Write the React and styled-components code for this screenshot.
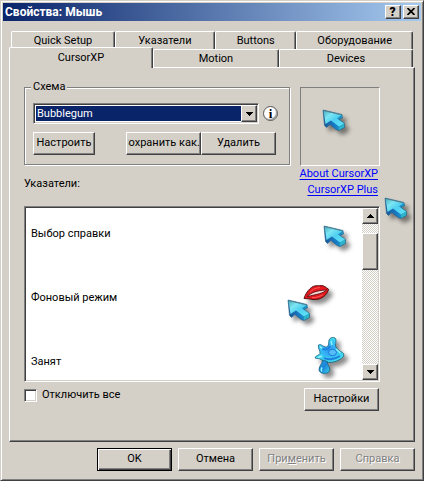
import { useState } from 'react';
import styled, { createGlobalStyle, css } from 'styled-components';

const GlobalStyle = createGlobalStyle`
  * {
    box-sizing: border-box;
  }
  body {
    margin: 0;
    background: #d4d0c8;
  }
  body, button, select, input {
    font-family: Roboto, 'Liberation Sans', sans-serif;
    font-size: 11px;
    line-height: 14px;
    color: #000;
  }
`;

const raised = css`
  border: 1px solid;
  border-color: #fff #404040 #404040 #fff;
  box-shadow: inset -1px -1px #808080;
`;

const sunken = css`
  border: 1px solid;
  border-color: #808080 #fff #fff #808080;
  box-shadow: inset 1px 1px #404040, inset -1px -1px #d4d0c8;
`;

const Window = styled.main`
  display: flex;
  flex-direction: column;
  min-height: 100vh;
  padding: 2px;
  background: #d4d0c8;
  border: 1px solid;
  border-color: #d4d0c8 #404040 #404040 #d4d0c8;
  box-shadow: inset 1px 1px #fff, inset -1px -1px #808080;
`;

const TitleBar = styled.header`
  display: flex;
  align-items: center;
  gap: 2px;
  height: 18px;
  padding: 0 2px;
  background: linear-gradient(to right, #0a246a, #a6caf0);
`;

const Title = styled.h1`
  flex: 1;
  margin: 0;
  color: #fff;
  font-size: 12px;
  font-weight: 700;
`;

const TitleButton = styled.button`
  ${raised}
  display: flex;
  align-items: center;
  justify-content: center;
  width: 16px;
  height: 14px;
  padding: 0 1px 1px 0;
  background: #d4d0c8;
  font-size: 12px;
  font-weight: 900;
`;

const Content = styled.div`
  display: flex;
  flex: 1;
  flex-direction: column;
  padding: 10px 6px 7px;
`;

const TabRow = styled.div`
  display: flex;
  height: 18px;
  padding: 0 2px;
`;

const Tab = styled.button`
  flex: ${({ $size }) => $size} 1 0;
  min-width: 0;
  height: ${({ $active }) => ($active ? '21px' : '18px')};
  margin: ${({ $active }) => ($active ? '-2px 0 -1px -2px' : '0')};
  padding: 0;
  background: #d4d0c8;
  border: solid;
  border-width: 1px 1px 0;
  border-color: #fff #404040 #fff #fff;
  border-radius: 2px 2px 0 0;
  box-shadow: inset -1px 0 #808080;
  z-index: ${({ $active }) => ($active ? 1 : 0)};
`;

const Panel = styled.section`
  display: flex;
  flex: 1;
  flex-direction: column;
  padding: 19px 34px 28px 14px;
  border: 1px solid;
  border-color: #fff #404040 #404040 #fff;
  box-shadow: inset -1px -1px #808080;
`;

const Top = styled.div`
  display: flex;
  align-items: flex-start;
  gap: 10px;
`;

const Scheme = styled.div`
  display: flex;
  flex: 1;
  flex-direction: column;
  position: relative;
  min-width: 0;
  height: 78px;
  padding: 15px 11px 0 8px;
  border: 1px solid #808080;
  box-shadow: 1px 1px #fff, inset 1px 1px #fff;
`;

const Legend = styled.span`
  position: absolute;
  top: -8px;
  left: 6px;
  padding: 0 2px;
  background: #d4d0c8;
`;

const SchemeRow = styled.div`
  display: flex;
  align-items: center;
  gap: 4px;
  margin-bottom: 8px;
`;

const SelectBox = styled.div`
  ${sunken}
  display: flex;
  flex: 1;
  height: 21px;
  padding: 1px;
  background: #fff;
`;

const Select = styled.select`
  appearance: none;
  flex: 1;
  min-width: 0;
  margin: 1px 0 1px 1px;
  padding: 0 1px;
  background: #0a246a;
  border: 0;
  border-radius: 0;
  outline: 0;
  color: #fff;
`;

const SmallButton = styled.button`
  ${raised}
  display: flex;
  flex: none;
  align-items: center;
  justify-content: center;
  width: 16px;
  height: ${({ $height }) => $height || '16px'};
  padding: 0;
  background: #d4d0c8;
`;

const InfoButton = styled.button`
  width: 15px;
  height: 15px;
  padding: 0;
  background: #fff;
  border: 1px solid #555;
  border-radius: 50%;
  box-shadow: inset -1px -1px 1px #999;
  font: 700 13px/12px 'Liberation Serif', serif;
`;

const Actions = styled.div`
  display: flex;
  padding-right: 2px;
`;

const Button = styled.button`
  ${raised}
  display: flex;
  flex: none;
  align-items: center;
  justify-content: center;
  width: ${({ $width }) => $width || '75px'};
  height: 23px;
  padding: 0 1px 1px;
  overflow: hidden;
  white-space: nowrap;
  background: #d4d0c8;
  ${({ $default }) =>
    $default &&
    css`
      border-color: #000;
      box-shadow: inset 1px 1px #fff, inset -1px -1px #404040,
        inset -2px -2px #808080;
    `}
  &:disabled {
    color: #808080;
    text-shadow: 1px 1px #fff;
  }
`;

const Caption = styled.span`
  display: flex;
  flex: 1;
  justify-content: center;
  min-width: 0;
  overflow: hidden;
`;

const SaveButton = styled(Button)`
  margin-left: auto;
`;

const Preview = styled.div`
  width: 80px;
  height: 79px;
  padding: 22px;
  border: 1px solid;
  border-color: #808080 #fff #fff #808080;
`;

const Middle = styled.div`
  display: flex;
  justify-content: space-between;
  height: 40px;
  padding-right: 2px;
`;

const ListLabel = styled.span`
  padding-top: 11px;
`;

const Links = styled.nav`
  display: flex;
  flex-direction: column;
  align-items: flex-end;
  line-height: 16px;
`;

const Link = styled.a`
  color: #00f;
  text-underline-offset: 2px;
`;

const ListBox = styled.div`
  ${sunken}
  display: flex;
  flex: none;
  height: 176px;
  padding: 1px;
  background: #fff;
`;

const Items = styled.ul`
  flex: 1;
  height: 172px;
  margin: 0;
  padding: 0;
  overflow: hidden;
  list-style: none;
`;

const Item = styled.li`
  display: flex;
  justify-content: space-between;
  height: 64px;
  padding-left: 5px;
  line-height: 52px;
`;

const Scrollbar = styled.div`
  display: flex;
  flex-direction: column;
  width: 16px;
  background: repeating-conic-gradient(#fff 0 25%, #d4d0c8 0 50%) 0 0 / 2px 2px;
`;

const Thumb = styled.div`
  ${raised}
  height: 37px;
  margin: 9px 0 auto;
  background: #d4d0c8;
`;

const Bottom = styled.div`
  display: flex;
  justify-content: space-between;
  align-items: flex-start;
  margin-top: 6px;
  padding-right: 1px;
`;

const CheckLabel = styled.label`
  display: flex;
  align-items: center;
  gap: 5px;
`;

const Checkbox = styled.input`
  ${sunken}
  appearance: none;
  width: 13px;
  height: 13px;
  margin: 0;
  background: #fff;
  &:checked {
    background: #fff radial-gradient(#000 35%, transparent 40%);
  }
`;

const Footer = styled.footer`
  display: flex;
  justify-content: flex-end;
  gap: 6px;
  margin-top: 6px;
`;

const Drawing = styled.svg`
  display: block;
  flex: none;
  overflow: visible;
  filter: drop-shadow(4px 4px 2px rgba(0, 0, 0, 0.45));
`;

const Pointer = styled.div`
  position: absolute;
  top: 198px;
  right: 15px;
  pointer-events: none;
`;

const Gradients = () => (
  <svg width="0" height="0" style={{ position: 'absolute' }} aria-hidden="true">
    <defs>
      <linearGradient id="face" x1="0" y1="0" x2="1" y2="1">
        <stop offset="0" stopColor="#4ba9b8" />
        <stop offset=".3" stopColor="#7ce6f4" />
        <stop offset=".55" stopColor="#4fd0f0" />
        <stop offset="1" stopColor="#62e4f8" />
      </linearGradient>
      <linearGradient id="side" x1="0" y1="0" x2="1" y2="0">
        <stop offset="0" stopColor="#1c5590" />
        <stop offset=".5" stopColor="#1677c4" />
        <stop offset="1" stopColor="#25a3c4" />
      </linearGradient>
      <radialGradient id="splat">
        <stop offset="0" stopColor="#2c8ff0" />
        <stop offset=".5" stopColor="#35b8f4" />
        <stop offset="1" stopColor="#43dcee" />
      </radialGradient>
      <linearGradient id="drop" x1="0" y1="0" x2="1" y2="1">
        <stop offset="0" stopColor="#2a9be8" />
        <stop offset=".5" stopColor="#1d86d8" />
        <stop offset="1" stopColor="#3bd8f0" />
      </linearGradient>
    </defs>
  </svg>
);

const Arrow = () => (
  <g>
    <path
      d="M0 0 19 4.5 19.5 8 16 9.5 21.5 13.5V17.5L16 20.5 13 19.5 7 14.5 3.5 17.5 1.5 15.5Z"
      fill="url(#side)"
      stroke="#20618a"
      strokeWidth=".6"
    />
    <path d="M.5.5 18.5 5 14 8.5 21 13.5 16 16.5 8 10.5 2.5 14Z" fill="url(#face)" />
    <path d="M16 17 21 14V17L16 20Z" fill="#2fb5ca" />
    <path d="M.7.6 18.5 5" stroke="#527f85" strokeWidth=".8" />
  </g>
);

const Lips = () => (
  <g stroke="#4a0808" strokeWidth=".9">
    <path
      d="M0 13.5C1.5 9 4 4.5 9 1.5 12 0 15 1 17 .6 20 .4 22 2.6 24.5 4.2 24 8 20 12.5 15 14 10 15.5 6 13.5 0 13.5Z"
      fill="#e3191f"
    />
    <path d="M3 11.5C8 7.5 12 5.5 22.5 5 20 8 13 9.5 3 11.5Z" fill="#f3d5d5" strokeWidth=".8" />
    <path d="M6 7.5C8 4.5 11 3 16 2.6M8 12.7C13 12.5 16 11.5 19 9.5" fill="none" stroke="#ff6060" />
  </g>
);

const Splat = () => (
  <g stroke="#17617f" strokeWidth=".8">
    <path
      d="M15 4C16 1.5 19 .8 21 2 23 3.5 21.5 7 21.5 10 22.5 13 25.5 15 28.5 16.5 31 18.5 29.5 21.5 26.5 23 23 25.5 19 26.5 14.5 26.5 11 27 9 24.5 7 23.5 5 22 3 23 1 22 1.5 19.5 5 19.5 6 17.5 6.5 14.5 3.5 12 4.5 9 6 7.5 8 9.5 10 10.5 12 11.5 13.5 11 14.5 9Z"
      fill="url(#splat)"
    />
    <path
      d="M8.5 24C8.8 27 5 30 5 33.5 5 36 7.5 37.5 10.5 37.5 14 37.5 16 35.5 15.8 33 15.5 30 13 28.5 13.5 25.5Z"
      fill="url(#drop)"
    />
    <path
      d="M8.5 13C12 14 15 12.5 16 10M10 22C13 24 20 24 26 20"
      fill="none"
      stroke="#1d7fe0"
      strokeWidth="2"
    />
    <ellipse cx="18.5" cy="16.5" rx="4" ry="3.2" fill="#55bdf8" stroke="#1468d0" />
    <path
      d="M17 5 18 9M6 10.5 8 12.5M22 13 26.5 17M8 31.5C7 33 7 34.5 8 35.5M4 21.5 8 20"
      fill="none"
      stroke="#8df6fb"
      strokeWidth="1.4"
    />
  </g>
);

const Cursor = () => (
  <Drawing width="24" height="24" aria-hidden="true">
    <Arrow />
  </Drawing>
);

const Triangle = ({ up }) => (
  <svg width="7" height="4" shapeRendering="crispEdges" aria-hidden="true">
    <path d={up ? 'M3 0H4V1H5V2H6V3H7V4H0V3H1V2H2V1H3Z' : 'M0 0H7V1H6V2H5V3H4V4H3V3H2V2H1V1H0Z'} />
  </svg>
);

const backTabs = [
  { name: 'Quick Setup', size: 104 },
  { name: 'Указатели', size: 100 },
  { name: 'Buttons', size: 81 },
  { name: 'Оборудование', size: 117 },
];

const frontTabs = [
  { name: 'CursorXP', size: 144 },
  { name: 'Motion', size: 126 },
  { name: 'Devices', size: 134 },
];

const pointers = [
  {
    name: 'Выбор справки',
    drawing: (
      <g transform="translate(42 18)">
        <Arrow />
      </g>
    ),
  },
  {
    name: 'Фоновый режим',
    drawing: (
      <>
        <g transform="translate(22 13)">
          <Lips />
        </g>
        <g transform="translate(6 28)">
          <Arrow />
        </g>
      </>
    ),
  },
  {
    name: 'Занят',
    drawing: (
      <g transform="translate(32 0)">
        <Splat />
      </g>
    ),
  },
];

export default function App() {
  const [active, setActive] = useState('CursorXP');
  const [disabled, setDisabled] = useState(false);

  const renderTab = ({ name, size }) => (
    <Tab
      key={name}
      type="button"
      role="tab"
      aria-selected={active === name}
      $size={size}
      $active={active === name}
      onClick={() => setActive(name)}
    >
      {name}
    </Tab>
  );

  return (
    <Window>
      <GlobalStyle />
      <Gradients />
      <TitleBar>
        <Title>Свойства: Мышь</Title>
        <TitleButton type="button" aria-label="Справка">
          ?
        </TitleButton>
        <TitleButton type="button" aria-label="Закрыть">
          <svg width="8" height="7" aria-hidden="true">
            <path d="M.5 0 7.5 7M7.5 0 .5 7" stroke="#000" strokeWidth="1.7" />
          </svg>
        </TitleButton>
      </TitleBar>
      <Content>
        <TabRow role="tablist">{backTabs.map(renderTab)}</TabRow>
        <TabRow role="tablist">{frontTabs.map(renderTab)}</TabRow>
        <Panel>
          <Top>
            <Scheme role="group" aria-labelledby="scheme">
              <Legend id="scheme">Схема</Legend>
              <SchemeRow>
                <SelectBox>
                  <Select aria-labelledby="scheme">
                    <option>Bubblegum</option>
                  </Select>
                  <SmallButton type="button" aria-label="Открыть" $height="17px">
                    <Triangle />
                  </SmallButton>
                </SelectBox>
                <InfoButton type="button">i</InfoButton>
              </SchemeRow>
              <Actions>
                <Button type="button" $width="62px">
                  Настроить
                </Button>
                <SaveButton type="button">
                  <Caption>Сохранить как...</Caption>
                </SaveButton>
                <Button type="button">Удалить</Button>
              </Actions>
            </Scheme>
            <Preview>
              <Cursor />
            </Preview>
          </Top>
          <Middle>
            <ListLabel id="pointers">Указатели:</ListLabel>
            <Links>
              <Link href="#about">About CursorXP</Link>
              <Link href="#plus">CursorXP Plus</Link>
            </Links>
          </Middle>
          <ListBox>
            <Items aria-labelledby="pointers">
              {pointers.map(({ name, drawing }) => (
                <Item key={name}>
                  {name}
                  <Drawing width="80" height="52" aria-hidden="true">
                    {drawing}
                  </Drawing>
                </Item>
              ))}
            </Items>
            <Scrollbar>
              <SmallButton type="button" aria-label="Вверх">
                <Triangle up />
              </SmallButton>
              <Thumb />
              <SmallButton type="button" aria-label="Вниз">
                <Triangle />
              </SmallButton>
            </Scrollbar>
          </ListBox>
          <Bottom>
            <CheckLabel>
              <Checkbox
                type="checkbox"
                checked={disabled}
                onChange={() => setDisabled(!disabled)}
              />
              Отключить все
            </CheckLabel>
            <Button type="button">Настройки</Button>
          </Bottom>
        </Panel>
        <Footer>
          <Button type="button" $default>
            OK
          </Button>
          <Button type="button">Отмена</Button>
          <Button type="button" disabled>
            <span>
              При<u>м</u>енить
            </span>
          </Button>
          <Button type="button" disabled>
            Справка
          </Button>
        </Footer>
      </Content>
      <Pointer>
        <Cursor />
      </Pointer>
    </Window>
  );
}
